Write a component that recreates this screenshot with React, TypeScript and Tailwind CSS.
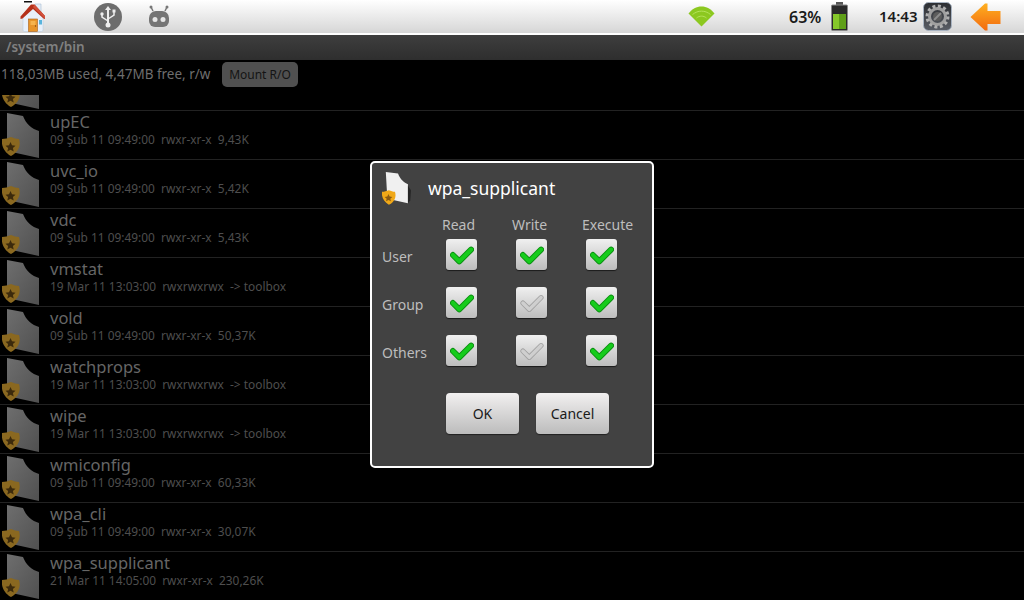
import React from 'react';

const files = [
    { name: '', meta: '' },
    { name: 'upEC', meta: '09 Şub 11 09:49:00  rwxr-xr-x  9,43K' },
    { name: 'uvc_io', meta: '09 Şub 11 09:49:00  rwxr-xr-x  5,42K' },
    { name: 'vdc', meta: '09 Şub 11 09:49:00  rwxr-xr-x  5,43K' },
    { name: 'vmstat', meta: '19 Mar 11 13:03:00  rwxrwxrwx  -> toolbox' },
    { name: 'vold', meta: '09 Şub 11 09:49:00  rwxr-xr-x  50,37K' },
    { name: 'watchprops', meta: '19 Mar 11 13:03:00  rwxrwxrwx  -> toolbox' },
    { name: 'wipe', meta: '19 Mar 11 13:03:00  rwxrwxrwx  -> toolbox' },
    { name: 'wmiconfig', meta: '09 Şub 11 09:49:00  rwxr-xr-x  60,33K' },
    { name: 'wpa_cli', meta: '09 Şub 11 09:49:00  rwxr-xr-x  30,07K' },
    { name: 'wpa_supplicant', meta: '21 Mar 11 14:05:00  rwxr-xr-x  230,26K' },
];

const HomeIcon = () => (
    <svg width="26" height="31" viewBox="0 0 26 31" className="shrink-0">
        <rect x="4" y="0" width="8" height="1.500" fill="#111" />
        <path d="M15 3h6v10h-6z" fill="#e4edf6" stroke="#a8bed4" strokeWidth="0.600" />
        <path d="M3 14 13 6l10 8v15a1.500 1.500 0 0 1-1.500 1.500h-17A1.500 1.500 0 0 1 3 29z" fill="#e8f0fa" stroke="#b4c8dc" strokeWidth="0.500" />
        <path d="M0.500 15.500 11 3.500h3.500L25 15v3l-1.500-.5L13 8 2.500 17.500 0.500 18z" fill="#b5301a" />
        <path d="M14.500 3.500 25 15v3L13 6z" fill="#d2503a" />
        <rect x="8.500" y="18" width="9" height="12.500" fill="#e8952a" stroke="#a8601a" strokeWidth="0.600" />
        <rect x="10.500" y="20" width="5" height="4" fill="#f6b44e" />
        <circle cx="15.500" cy="25" r="0.700" fill="#7a4412" />
        <rect x="19" y="19" width="3" height="4.500" fill="#58b4dc" />
    </svg>
);

const UsbIcon = () => (
    <svg width="28" height="28" viewBox="0 0 28 28" className="shrink-0">
        <circle cx="14" cy="14" r="14" fill="#6d6d6d" />
        <path d="M14 3l3 4h-2v13h-2V7h-2z" fill="#eee" />
        <circle cx="14" cy="22" r="2.500" fill="#eee" />
        <path d="M14 18l-6-4v-2M14 16l6-4V9" stroke="#eee" strokeWidth="1.500" fill="none" />
        <circle cx="8" cy="11" r="1.700" fill="#eee" />
        <rect x="18.500" y="6.500" width="3" height="3" fill="#eee" />
    </svg>
);

const BotIcon = () => (
    <svg width="22" height="23" viewBox="0 0 22 23" className="shrink-0">
        <path d="M5 6 3 2M17 6l2-4" stroke="#777" strokeWidth="1.500" />
        <circle cx="3" cy="2" r="1.500" fill="#777" />
        <circle cx="19" cy="2" r="1.500" fill="#777" />
        <path d="M1 13a7 7 0 0 1 7-7h6a7 7 0 0 1 7 7v3a6 6 0 0 1-6 6H7a6 6 0 0 1-6-6z" fill="#757575" />
        <circle cx="7" cy="14.500" r="2.500" fill="#e6e6e6" />
        <circle cx="15" cy="14.500" r="2.500" fill="#e6e6e6" />
    </svg>
);

const WifiIcon = () => (
    <svg width="27" height="21" viewBox="0 0 27 21" className="shrink-0">
        <path d="M13.500 20.500 0.500 7.500C4 3 8.500 0.500 13.500 0.500s9.500 2.500 13 7z" fill="#8cc820" />
        <path d="M4.500 8.500C10 4 17 4 22.500 8.500" stroke="#b5e35a" strokeWidth="1" fill="none" />
        <path d="M8.500 12C11.500 9.500 15.500 9.500 18.500 12" stroke="#b5e35a" strokeWidth="1" fill="none" />
    </svg>
);

const BatteryIcon = () => (
    <svg width="17" height="29" viewBox="0 0 17 29" className="shrink-0">
        <rect x="5" y="0" width="7" height="3" fill="#555" />
        <rect x="0.500" y="3" width="16" height="25.500" rx="1" fill="#2a2a2a" stroke="#8a8a8a" />
        <rect x="2" y="12" width="13" height="15" fill="#5f9f18" />
        <rect x="2" y="12" width="6" height="15" fill="#86c82a" />
    </svg>
);

const GearIcon = () => (
    <svg width="29" height="29" viewBox="0 0 29 29" className="shrink-0">
        <defs>
            <linearGradient id="gearbg" x1="0" y1="0" x2="0" y2="1">
                <stop offset="0" stopColor="#2c2e32" />
                <stop offset="1" stopColor="#5a5e66" />
            </linearGradient>
        </defs>
        <rect x="0.500" y="0.500" width="28" height="28" rx="5" fill="url(#gearbg)" stroke="#a9b4c2" />
        <circle cx="14.500" cy="14.500" r="8" fill="none" stroke="#a0a0a0" strokeWidth="3" />
        <circle cx="14.500" cy="14.500" r="10.500" fill="none" stroke="#b0b0b0" strokeWidth="3" strokeDasharray="3 2.500" />
        <circle cx="14.500" cy="14.500" r="4.500" fill="#5c5c5c" />
        <path d="M11 18l7-7" stroke="#8c8c8c" strokeWidth="2" />
    </svg>
);

const BackIcon = () => (
    <svg width="31" height="28" viewBox="0 0 31 28" className="shrink-0">
        <defs>
            <linearGradient id="back" x1="0" y1="0" x2="0" y2="1">
                <stop offset="0" stopColor="#ffb020" />
                <stop offset="1" stopColor="#f26a10" />
            </linearGradient>
        </defs>
        <path d="M0.500 14 15 0.500h2.500V8h13v13h-13v6.500H15z" fill="url(#back)" />
    </svg>
);

// executable file with the sheriff badge; dimmed in the list behind the dialog
const FileIcon: React.FC = () => (
    <svg width="38" height="47" viewBox="0 0 38 47" className="shrink-0">
        <defs>
            <linearGradient id="sheet" x1="0" y1="0" x2="1" y2="1">
                <stop offset="0" stopColor="#6e6e6e" />
                <stop offset="1" stopColor="#505050" />
            </linearGradient>
        </defs>
        <path d="M5 1 21 4c3 8 9 13 16 15v27L5 39z" fill="url(#sheet)" />
        <path d="M0 27c3 0 6-1 9-2 3 1 5 2 8 2 2 6 0 13-8 17C2 40-1 33 0 27z" fill="#8a6820" />
        <path d="m8.500 30 1.500 3.300 3.500.4-2.600 2.300.8 3.500-3.200-1.800-3.200 1.800.8-3.500L3.500 33.700l3.500-.4z" fill="#3c2a0c" />
    </svg>
);

const FileIconSmall = () => (
    <svg width="29" height="34" viewBox="0 0 38 44" className="shrink-0">
        <path d="M5 1 21 3c3 8 8 12 13 14v25L7 36z" fill="#f0f0f0" />
        <path d="M34 19l4 6-1 13-3 4z" fill="#262626" />
        <path d="M0 27c3 0 6-1 9-2 3 1 5 2 8 2 2 6 0 13-8 17C2 40-1 33 0 27z" fill="#f0a818" />
        <path d="m8.500 30 1.500 3.300 3.500.4-2.600 2.300.8 3.500-3.200-1.800-3.200 1.800.8-3.500L3.500 33.700l3.500-.4z" fill="#8a5a10" />
    </svg>
);

const GreenCheck = () => (
    <svg width="24" height="20" viewBox="0 0 26 22">
        <path d="M3 11l7 7L23 5" fill="none" stroke="#0a8f10" strokeWidth="6.500" strokeLinecap="round" strokeLinejoin="round" />
        <path d="M3 11l7 7L23 5" fill="none" stroke="#16cc1c" strokeWidth="4.500" strokeLinecap="round" strokeLinejoin="round" />
    </svg>
);

const GrayCheck = () => (
    <svg width="24" height="20" viewBox="0 0 26 22">
        <path d="M3 11l7 7L23 5" fill="none" stroke="#a0a0a0" strokeWidth="5.500" strokeLinecap="round" strokeLinejoin="round" />
        <path d="M3 11l7 7L23 5" fill="none" stroke="#cfcfcf" strokeWidth="3.800" strokeLinecap="round" strokeLinejoin="round" />
    </svg>
);

const Check: React.FC<{ on: boolean }> = ({ on }) => (
    <div className="ml-[4px] flex h-[31px] w-[31px] items-center justify-center rounded-[3px] bg-gradient-to-b from-[#f0f0f0] to-[#bdbdbd] shadow-[0_1px_1px_rgba(0,0,0,0.6)]">
        {on ? <GreenCheck /> : <GrayCheck />}
    </div>
);

const perms: { label: string; checks: boolean[] }[] = [
    { label: 'User', checks: [true, true, true] },
    { label: 'Group', checks: [true, false, true] },
    { label: 'Others', checks: [true, false, true] },
];

const DialogButton: React.FC<{ label: string }> = ({ label }) => (
    <button className="h-[41px] w-[73px] rounded-[4px] bg-gradient-to-b from-[#f2f0f0] to-[#bcbcbc] text-[14px] text-[#1a1a1a] shadow-[0_1px_1px_rgba(0,0,0,0.5)]">
        {label}
    </button>
);

const App: React.FC = () => {
    return (
        <div className="relative flex h-[600px] w-[1024px] flex-col overflow-hidden bg-black font-['Noto_Sans',sans-serif]">
            {/* status bar */}
            <div className="flex h-[33px] shrink-0 items-center bg-gradient-to-b from-white to-[#d6d6d6] pl-5">
                <HomeIcon />
                <div className="ml-[48px]"><UsbIcon /></div>
                <div className="ml-[26px]"><BotIcon /></div>
                <div className="ml-[518px]"><WifiIcon /></div>
                <span className="ml-[74px] w-[33px] text-[16px] font-semibold text-[#1a1a1a]">63%</span>
                <div className="ml-[9px]"><BatteryIcon /></div>
                <span className="ml-[31px] w-[38px] whitespace-nowrap text-[15px] font-semibold text-[#1a1a1a]">14:43</span>
                <div className="ml-[6px]"><GearIcon /></div>
                <div className="ml-[18px]"><BackIcon /></div>
            </div>
            <div className="h-[2px] shrink-0 bg-white" />

            {/* path bar */}
            <div className="flex h-[25px] shrink-0 items-center bg-gradient-to-b from-[#3e3e3e] to-[#2e2e2e] pb-px pl-[6px] text-[13.500px] font-semibold text-[#808080]">
                /system/bin
            </div>

            {/* storage info */}
            <div className="z-10 flex h-[35px] shrink-0 items-start bg-black pl-px">
                <span className="mt-[4px] w-[221px] text-[13.500px] text-[#6e6e6e]">118,03MB used, 4,47MB free, r/w</span>
                <button className="mt-[2px] h-[25px] w-[76px] rounded-[5px] bg-[#505050] text-[12px] text-[#141414]">Mount R/O</button>
            </div>

            {/* file list, scrolled so the first row is cut */}
            <div className="mt-[-33px] flex flex-col">
                {files.map((file, i) => (
                    <div key={i} className="flex h-[49px] shrink-0 items-center border-b border-[#222] pl-[2px]">
                        <FileIcon />
                        <div className="ml-[10px] flex flex-col self-start">
                            <span className="h-[20px] text-[16.500px] leading-[21px] text-[#666666]">{file.name}</span>
                            <span className="whitespace-pre text-[11.900px] leading-[16px] text-[#4e4e4e]">{file.meta}</span>
                        </div>
                    </div>
                ))}
            </div>

            {/* permissions dialog */}
            <div className="absolute left-[370px] top-[161px] z-20 flex h-[307px] w-[284px] flex-col rounded-[5px] border-2 border-white bg-[#424242] pl-[10px]">
                <div className="mt-[9px] flex h-[32px] items-center">
                    <FileIconSmall />
                    <span className="ml-[17px] text-[17.500px] text-white">wpa_supplicant</span>
                </div>
                <div className="mt-[10px] grid grid-cols-[60px_70px_70px_70px] text-[14px] text-[#bdbdbd]">
                    <span />
                    <span>Read</span>
                    <span>Write</span>
                    <span>Execute</span>
                </div>
                <div className="mt-[4px] flex flex-col gap-[17px]">
                    {perms.map((row) => (
                        <div key={row.label} className="grid grid-cols-[60px_70px_70px_70px] items-center text-[14px] text-[#bdbdbd]">
                            <span className="pt-[3px]">{row.label}</span>
                            {row.checks.map((on, i) => (
                                <Check key={i} on={on} />
                            ))}
                        </div>
                    ))}
                </div>
                <div className="ml-[64px] mt-[27px] flex gap-[17px]">
                    <DialogButton label="OK" />
                    <DialogButton label="Cancel" />
                </div>
            </div>
        </div>
    );
};

export default App;
